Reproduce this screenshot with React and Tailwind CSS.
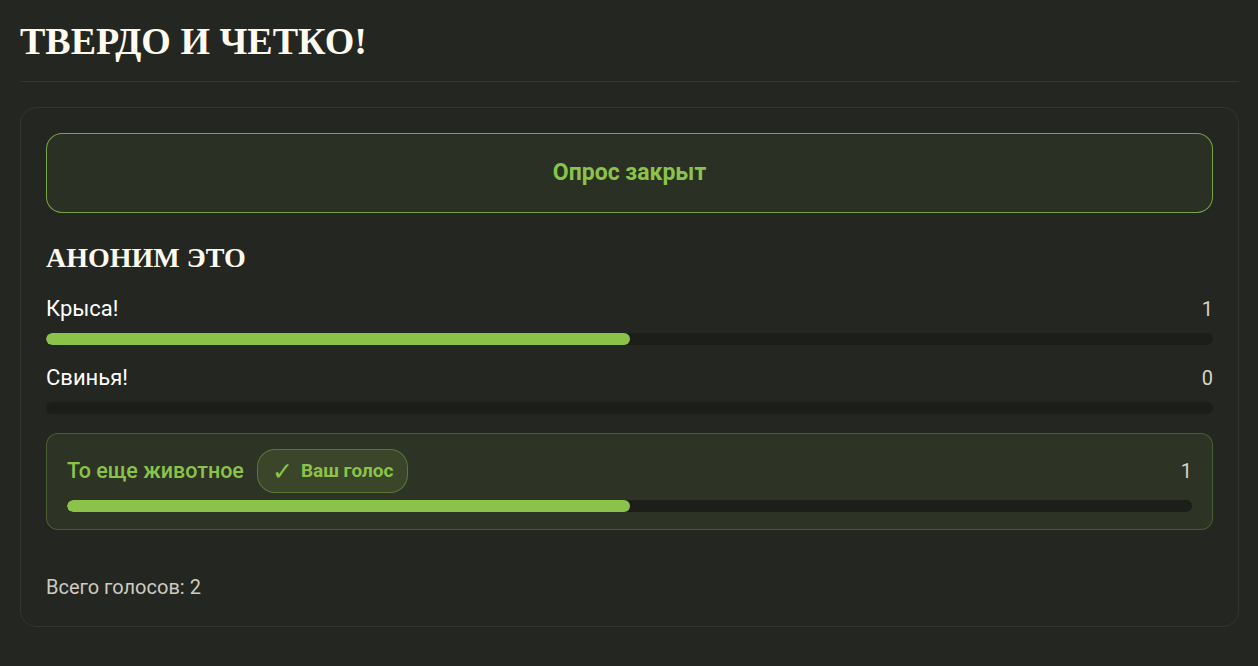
const options = [
  { label: 'Крыса!', votes: 1 },
  { label: 'Свинья!', votes: 0 },
  { label: 'То еще животное', votes: 1, mine: true },
]

const total = 2

function Bar({ pct }) {
  return (
    <div className="h-3 w-full rounded-full bg-[#1c1e19] overflow-hidden">
      <div className="h-full rounded-full bg-[#8bc34a]" style={{ width: `${pct}%` }} />
    </div>
  )
}

function Option({ label, votes, mine }) {
  const pct = total ? (votes / total) * 100 : 0
  if (mine) {
    return (
      <div className="mt-[2px] rounded-xl border border-[#8bc34a]/30 bg-[#2d3325] px-5 pt-[15px] pb-[17px]">
        <div className="flex items-center justify-between mb-[7px]">
          <div className="flex items-center gap-[13px]">
            <span className="text-[21.5px] font-medium text-[#8bc34a]">{label}</span>
            <span className="flex items-center gap-2 h-11 px-[14px] rounded-[18px] border border-[#8bc34a]/40 bg-[#3a4529] text-[19px] font-bold text-[#8bc34a]">
              <span className="text-[25px] font-normal leading-none">✓</span>
              Ваш голос
            </span>
          </div>
          <span className="text-[20px] text-[#d9d4c4]">{votes}</span>
        </div>
        <Bar pct={pct} />
      </div>
    )
  }
  return (
    <div>
      <div className="flex items-center justify-between mb-2 leading-8 text-[22px] text-white">
        <span>{label}</span>
        <span className="text-[20px] text-[#d9d4c4]">{votes}</span>
      </div>
      <Bar pct={pct} />
    </div>
  )
}

export default function App() {
  return (
    <div className="min-h-[666px] bg-[#242621] pl-5 pr-[19px] pt-[13px] font-['Roboto',sans-serif]">
      <h1 className="font-['Liberation_Serif',serif] text-[38px] font-bold text-[#fffaf0] pb-[11px] border-b border-[#33362f]">
        ТВЕРДО И ЧЕТКО!
      </h1>
      <div className="mt-[25px] rounded-2xl border border-[#33362f] bg-[#242621] px-[25px] pt-[25px] pb-6">
        <div className="h-20 flex items-center justify-center rounded-2xl border border-[#8bc34a]/80 bg-[#2b3024] text-[23px] font-bold text-[#8bc34a]">
          Опрос закрыт
        </div>
        <h2 className="mt-[24px] font-['Liberation_Serif',serif] text-[28px] font-bold text-[#fffaf0]">
          АНОНИМ ЭТО
        </h2>
        <div className="mt-[14px] flex flex-col gap-[17px]">
          {options.map(o => <Option key={o.label} {...o} />)}
        </div>
        <p className="mt-[42px] text-[20px] leading-[30px] text-[#cfcbc0]">Всего голосов: {total}</p>
      </div>
    </div>
  )
}
